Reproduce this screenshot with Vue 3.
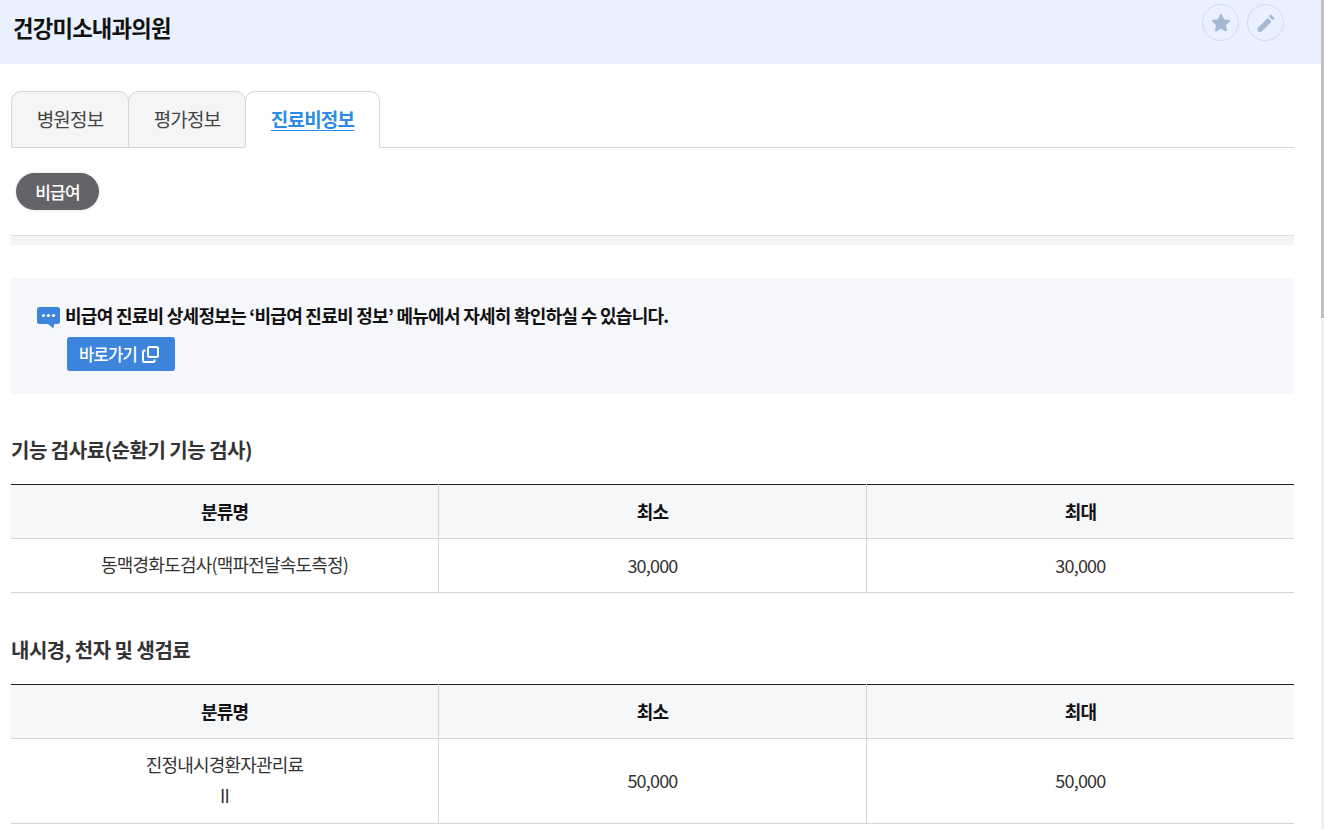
<script setup>
const sections = [
  {
    title: '기능 검사료(순환기 기능 검사)',
    rows: [{ name: ['동맥경화도검사(맥파전달속도측정)'], min: '30,000', max: '30,000' }]
  },
  {
    title: '내시경, 천자 및 생검료',
    rows: [{ name: ['진정내시경환자관리료', 'II'], min: '50,000', max: '50,000' }]
  }
]
</script>

<template>
  <div class="page">
    <header class="top">
      <h1>건강미소내과의원</h1>
      <div class="actions">
        <button class="round">
          <svg width="22" height="22" viewBox="0 0 24 24"><path fill="#a6b7d2" stroke="#a6b7d2" stroke-width="2.400" stroke-linejoin="round" d="M12 3.500l2.600 5.600 6 .7-4.500 4.100 1.200 6L12 17l-5.300 2.900 1.200-6L3.400 9.800l6-.7z"/></svg>
        </button>
        <button class="round">
          <svg width="22" height="22" viewBox="0 0 24 24"><path fill="#a6b7d2" d="M3 17.500V21.500h4L18 10.500l-4-4zM20.700 7.800a1.100 1.100 0 0 0 0-1.600l-2.900-2.900a1.100 1.100 0 0 0-1.600 0l-1.200 1.200 4.500 4.500z"/></svg>
        </button>
      </div>
    </header>

    <main class="content">
      <nav class="tabs">
        <a class="tab">병원정보</a>
        <a class="tab">평가정보</a>
        <a class="tab on">진료비정보</a>
      </nav>

      <div class="pills"><span class="pill">비급여</span></div>
      <div class="band"></div>

      <section class="notice">
        <p class="msg">
          <svg width="25" height="24" viewBox="0 0 25 24"><path fill="#3d85dc" d="M3.500 1h18A2.500 2.500 0 0 1 24 3.500v12a2.500 2.500 0 0 1-2.500 2.500H18l-.5 4.500-5.500-4.500H3.500A2.500 2.500 0 0 1 1 15.500v-12A2.500 2.500 0 0 1 3.500 1z"/><circle cx="7.500" cy="9.500" r="1.600" fill="#fff"/><circle cx="12.500" cy="9.500" r="1.600" fill="#fff"/><circle cx="17.500" cy="9.500" r="1.600" fill="#fff"/></svg>
          <span>비급여 진료비 상세정보는 ‘비급여 진료비 정보’ 메뉴에서 자세히 확인하실 수 있습니다.</span>
        </p>
        <a class="go">바로가기
          <svg width="17" height="17" viewBox="0 0 17 17" fill="none" stroke="#fff" stroke-width="2"><rect x="6" y="1" width="10" height="10" rx="1.500"/><path d="M3.500 4.500h-.9a1.600 1.600 0 0 0-1.600 1.600v8.300a1.600 1.600 0 0 0 1.600 1.600h8.300a1.600 1.600 0 0 0 1.600-1.600v-.9"/></svg>
        </a>
      </section>

      <section v-for="s in sections" :key="s.title" class="block">
        <h2>{{ s.title }}</h2>
        <table>
          <thead>
            <tr><th>분류명</th><th>최소</th><th>최대</th></tr>
          </thead>
          <tbody>
            <tr v-for="r in s.rows" :key="r.name[0]">
              <td><div v-for="n in r.name" :key="n" class="nm">{{ n }}</div></td>
              <td>{{ r.min }}</td>
              <td>{{ r.max }}</td>
            </tr>
          </tbody>
        </table>
      </section>
    </main>

    <div class="scroll"><div class="thumb"></div></div>
  </div>
</template>

<style>
html, body { margin: 0; height: 829px; overflow: hidden; background: #fff; }
</style>

<style scoped>
* { box-sizing: border-box; }

.page {
  font-family: "Noto Sans CJK KR", "Noto Sans", sans-serif;
  letter-spacing: -0.05em;
  color: #333;
  height: 829px;
  overflow: hidden;
}

.top {
  height: 64px;
  background: #e8f1fd;
  display: flex;
  justify-content: space-between;
  padding: 4px 40px 0 13px;
}
.top h1 {
  margin: 5px 0 0;
  font-size: 22.3px;
  line-height: 36px;
  font-weight: 700;
  color: #111;
}
.actions { display: flex; gap: 8px; }
.round {
  width: 37px;
  height: 37px;
  border-radius: 50%;
  border: 1px solid #cfdbe8;
  background: transparent;
  padding: 0;
  display: flex;
  align-items: center;
  justify-content: center;
}

.content { padding: 27px 30px 0 11px; }

.tabs {
  display: flex;
  height: 57px;
  border-bottom: 1px solid #d9d9d9;
}
.tab {
  width: 118px;
  height: 57px;
  margin-right: -1px;
  padding-bottom: 2px;
  border: 1px solid #d5d5d5;
  border-radius: 10px 10px 0 0;
  background: #f5f5f5;
  font-size: 19px;
  color: #444;
  display: flex;
  align-items: center;
  justify-content: center;
}
.tab.on {
  width: 135px;
  margin-right: 0;
  background: #fff;
  border-bottom-color: #fff;
  color: #2b8be6;
  font-weight: 700;
  text-decoration: underline;
  text-underline-offset: 3px;
}

.pills { padding: 25px 0 25px 5px; height: 87px; }
.pill {
  display: inline-flex;
  align-items: center;
  justify-content: center;
  width: 83px;
  height: 37px;
  border-radius: 19px;
  background: #646468;
  color: #fff;
  font-size: 17px;
  font-weight: 500;
  box-shadow: 0 0 3px rgba(0, 0, 0, 0.15);
}
.band {
  height: 10px;
  background: #f4f4f4;
  border-top: 1px solid #dedede;
}

.notice {
  margin-top: 33px;
  height: 116px;
  background: #f5f7fa;
  padding: 25px 25px 0;
}
.msg {
  margin: 0;
  display: flex;
  align-items: flex-start;
  gap: 4px;
  font-size: 18px;
  line-height: 24px;
  font-weight: 700;
  letter-spacing: -0.04em;
  color: #111;
}
.msg svg { margin-top: 3px; }
.go {
  margin: 7px 0 0 31px;
  width: 108px;
  height: 34px;
  padding-left: 12px;
  border-radius: 3px;
  background: #3d85dc;
  color: #fff;
  font-size: 16.600px;
  font-weight: 500;
  display: flex;
  align-items: center;
  gap: 5px;
}

.block h2 {
  margin: 0;
  padding-top: 44px;
  height: 91px;
  font-size: 20px;
  line-height: 26px;
  font-weight: 700;
  letter-spacing: -0.025em;
  color: #333;
}
.notice + .block h2 { padding-top: 43px; height: 90px; }

table {
  width: 100%;
  table-layout: fixed;
  border-collapse: collapse;
  border-top: 1px solid #222;
}
th, td {
  text-align: center;
  border-bottom: 1px solid #d5d5d5;
  border-left: 1px solid #d5d5d5;
  font-size: 18px;
}
th:first-child, td:first-child { border-left: 0; }
th {
  height: 54px;
  padding-bottom: 2px;
  background: #f6f7f9;
  font-weight: 700;
  color: #111;
}
td {
  padding: 10px 0 12px;
  color: #333;
}
.nm { line-height: 31px; }

.scroll {
  position: fixed;
  top: 0;
  right: 0;
  width: 3px;
  height: 829px;
  background: #f1f1f1;
}
.thumb { height: 318px; background: #c1c1c1; }
</style>
